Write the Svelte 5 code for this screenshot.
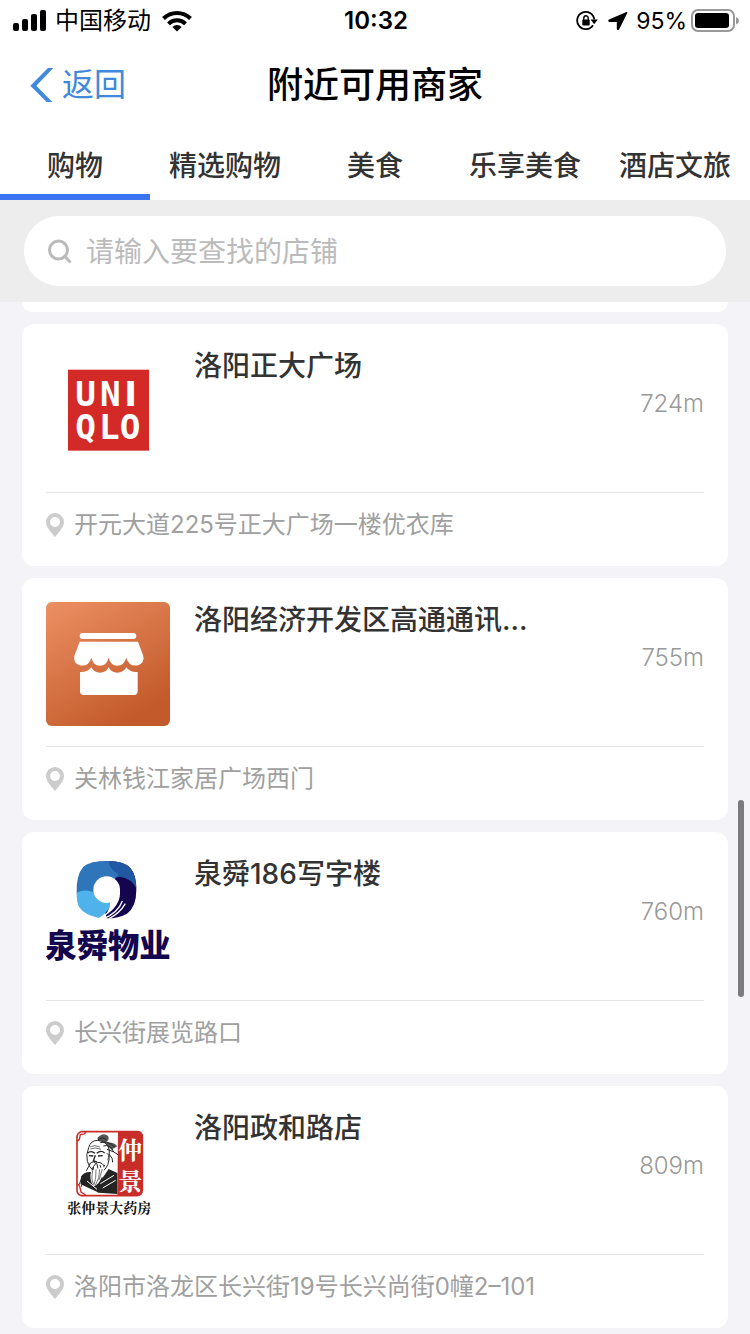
<script lang="ts">
  let tabs = ['购物', '精选购物', '美食', '乐享美食', '酒店文旅'];
  let activeTab = '购物';
  let keyword = '';

  let shops = [
    { logo: 'uniqlo', name: '洛阳正大广场', distance: '724m', address: '开元大道225号正大广场一楼优衣库' },
    { logo: 'default', name: '洛阳经济开发区高通通讯…', distance: '755m', address: '关林钱江家居广场西门' },
    { logo: 'quanshun', name: '泉舜186写字楼', distance: '760m', address: '长兴街展览路口' },
    { logo: 'zhongjing', name: '洛阳政和路店', distance: '809m', address: '洛阳市洛龙区长兴街19号长兴尚街0幢2–101' },
  ];
</script>

<div class="page" lang="zh-CN">
  <div class="status-bar">
    <div class="status-left">
      <svg width="34" height="22" viewBox="0 0 34 22">
        <rect x="0" y="13" width="6" height="8" rx="2" />
        <rect x="9" y="9" width="6" height="12" rx="2" />
        <rect x="18" y="4" width="6" height="17" rx="2" />
        <rect x="27" y="0" width="6" height="21" rx="2" />
      </svg>
      <span class="carrier">中国移动</span>
      <svg width="30" height="22" viewBox="0 0 30 22">
        <g fill="none" stroke="#000" stroke-width="4">
          <path d="M1.5 8.5a19.2 19.2 0 0 1 27 0" />
          <path d="M6.5 13.8a12 12 0 0 1 17 0" />
        </g>
        <path d="M15 21.5l-4.6-4.6a6.6 6.6 0 0 1 9.2 0z" />
      </svg>
    </div>
    <span class="time">10:32</span>
    <div class="status-right">
      <svg width="22" height="20" viewBox="0 0 22 20">
        <path d="M17 14.2A8.600 8.600 0 1 1 18.300 8.500" fill="none" stroke="#000" stroke-width="1.8" />
        <path d="M14.600 8.500h7.200l-3.600 4.800z" />
        <rect x="6.3" y="8.5" width="7.4" height="6" rx="1" />
        <path d="M7.8 9V7a2.2 2.2 0 0 1 4.4 0v2" fill="none" stroke="#000" stroke-width="1.4" />
      </svg>
      <svg class="locate" width="20" height="20" viewBox="0 0 20 20">
        <path d="M18.500 1L1 8.600C-.2 9.200 0 11 1.500 11H8.800V17.600C8.800 19.400 10.600 19.500 11.200 18.300L19.300 1.900Q19.500 .7 18.500 1Z" />
      </svg>
      <span class="percent">95%</span>
      <svg width="48" height="24" viewBox="0 0 48 24">
        <rect x="1" y="1" width="42" height="21" rx="6" fill="none" stroke="#999" stroke-width="2" />
        <rect x="4" y="4" width="34" height="15" rx="3" />
        <path d="M45 8q3 1.200 3 3.700T45 15.500z" fill="#999" />
      </svg>
    </div>
  </div>

  <header class="nav-bar">
    <button class="back" type="button">
      <svg width="24" height="34" viewBox="0 0 72 102">
        <path d="M1 53L54 0H70L19 53L67 102H50Z" fill="#4089dc" />
      </svg>
      返回
    </button>
    <h1>附近可用商家</h1>
  </header>

  <nav class="tabs">
    {#each tabs as tab}
      <button type="button" class:active={activeTab === tab} on:click={() => (activeTab = tab)}>{tab}</button>
    {/each}
  </nav>

  <form class="search" on:submit|preventDefault>
    <label class="search-box">
      <svg width="26" height="26" viewBox="0 0 26 26">
        <circle cx="10.500" cy="12" r="9" fill="none" stroke="#bbb" stroke-width="3" />
        <path d="M17 18.500l5.500 6" stroke="#bbb" stroke-width="3" />
      </svg>
      <input type="text" aria-label="查找店铺" placeholder="请输入要查找的店铺" bind:value={keyword} />
    </label>
  </form>

  <main class="list">
    <div class="card-end"></div>
    {#each shops as shop}
      <article class="card">
        <div class="shop">
          {#if shop.logo === 'uniqlo'}
            <svg class="logo" viewBox="78 24 372 372">
              <rect x="144" y="89" width="243" height="243" fill="#d42a27" />
              <text class="uniqlo"><tspan x="197 271" y="197">UN</tspan><tspan class="narrow" x="332" y="197">I</tspan><tspan x="197 268 330" y="298">QLO</tspan></text>
            </svg>
          {:else if shop.logo === 'default'}
            <svg class="logo" viewBox="48 36 372 372">
              <defs>
                <linearGradient id="orange" x1="0" y1="0" x2="0.6" y2="1">
                  <stop offset="0" stop-color="#ec9063" />
                  <stop offset="1" stop-color="#c35a2b" />
                </linearGradient>
              </defs>
              <rect x="48" y="36" width="372" height="372" rx="18" fill="url(#orange)" />
              <g fill="#fff">
                <rect x="149" y="129" width="170" height="18" rx="9" />
                <path d="M149 155H324L340 198Q344 219 324 226Q297 231 289 203Q282 227 262 227Q242 227 236 203Q230 227 210 227Q190 227 184 203Q176 231 149 226Q129 219 133 198Z" />
                <path d="M150 246Q174 247 184 232Q192 248 210 248Q228 248 236 232Q244 248 262 248Q280 248 289 232Q300 248 323 246V304Q323 315 312 315H161Q150 315 150 304Z" />
              </g>
            </svg>
          {:else if shop.logo === 'quanshun'}
            <svg class="logo" viewBox="48 48 372 372">
              <path d="M230 63Q283 63 301 84Q320 105 319 150Q319 201 291 221Q266 235 230 235L200 120Z" fill="#14054f" />
              <path d="M185 68Q208 63 235 63Q286 63 303 87Q318 107 319 145Q307 116 270 110L210 120Z" fill="#2158a4" />
              <path d="M140 160Q138 105 160 80Q182 62 237 64Q236 85 265 104L205 180Q165 150 140 160Z" fill="#2e75b9" />
              <path d="M140 158Q165 146 191 157Q203 185 245 184Q240 214 207 234Q163 225 148 202Q139 187 140 158Z" fill="#50b2eb" />
              <circle cx="230" cy="149" r="40" fill="#fff" />
              <path d="M269 145Q279 202 207 237Q241 220 241 184Z" fill="#fff" />
              <path d="M277 183Q265 217 221 236M286 191Q269 220 237 236" fill="none" stroke="#fff" stroke-width="4" />
              <text class="quanshun" x="46" y="350">泉舜物业</text>
            </svg>
          {:else}
            <svg class="logo" viewBox="-12 0 372 372">
              <path d="M93 65H264Q278 68 277 82V240Q276 256 260 257H94Q80 253 81 238V82Q81 69 93 65Z" fill="#fff" stroke="#c92d28" stroke-width="5" />
              <path d="M204 65H264Q278 68 277 82V240Q276 256 260 257H202Z" fill="#c92d28" />
              <path d="M81 95l7-7 3-14 12-2 6-7M81 220l8 9 4 17 14 9" fill="none" stroke="#c92d28" stroke-width="4" />
              <path d="M142 84Q160 65 174 78Q181 89 166 98L147 99ZM164 98Q193 94 202 109L184 119Z" fill="#555" />
              <path d="M127 187Q107 182 94 198L92 223L147 248L202 252V189L176 177L158 203Z" fill="#242424" />
              <path d="M116 113Q122 91 143 91Q172 94 178 120L177 150Q172 179 151 188Q123 187 112 154Q107 134 116 113Z" fill="#fff" stroke="#292929" stroke-width="3" />
              <g fill="none" stroke="#222" stroke-width="3">
                <path d="M143 91Q158 76 170 91M151 98Q176 91 194 111M160 108Q181 101 191 126M171 118Q193 124 205 135M177 132Q190 145 188 157" />
                <path d="M113 129Q123 120 135 130M140 130Q153 119 164 129M117 137l13 1M144 138l14-1M136 136l-6 17 11 3" stroke-width="4" />
                <path d="M121 110Q133 103 150 111M121 117Q135 110 153 118M169 131Q180 129 173 151" stroke-width="2" />
                <path d="M118 162Q132 150 137 161Q150 151 163 168M121 161L109 182M137 161Q123 174 123 210M141 162Q149 190 137 224M150 165Q161 187 145 233M163 165L153 204M130 171Q129 188 129 217" />
                <path d="M96 199L88 224M106 193L94 230M124 211L145 248M191 189Q178 204 184 248" />
              </g>
              <path d="M124 181Q116 208 131 229Q146 227 158 196L164 171L148 174Z" fill="#fff" />
              <path d="M129 178Q121 209 132 224M138 178Q139 206 132 224M149 178Q150 204 136 226M157 177L147 211" fill="none" stroke="#333" stroke-width="2" />
              <path d="M151 221L192 196M158 234L197 211M111 213L141 238" stroke="#fff" stroke-width="3" />
              <text class="seal"><tspan x="205" y="147">仲</tspan><tspan x="205" y="241">景</tspan></text>
              <text class="caption" x="52" y="310">张仲景大药房</text>
            </svg>
          {/if}
          <div class="info">
            <h2>{shop.name}</h2>
            <p class="distance">{shop.distance}</p>
          </div>
        </div>
        <p class="address">
          <svg width="18" height="24" viewBox="0 0 18 24">
            <path fill-rule="evenodd" d="M9 0a9 9 0 0 1 9 9c0 5-5 10-9 15C5 19 0 14 0 9a9 9 0 0 1 9-9zm0 4a5 5 0 1 0 0 10a5 5 0 0 0 0-10z" fill="#ccc" />
          </svg>
          {shop.address}
        </p>
      </article>
    {/each}
  </main>
  <div class="scroll-thumb"></div>
</div>

<style>
  :global(body) {
    background: #f3f3f8;
  }

  .page {
    font-family: Inter, "Noto Sans CJK SC", sans-serif;
    color: #333;
  }

  svg {
    display: block;
    flex: none;
  }

  button {
    padding: 0;
    border: none;
    background: none;
    font-family: inherit;
    cursor: pointer;
  }

  h1, h2, p {
    margin: 0;
  }

  .status-bar {
    display: grid;
    grid-template-columns: 1fr auto 1fr;
    align-items: center;
    height: 40px;
    padding: 0 11px 0 13px;
    background: #fff;
    color: #000;
    font-size: 24px;
    line-height: 42px;
  }

  .status-left,
  .status-right {
    display: flex;
    align-items: center;
  }

  .status-right {
    justify-content: flex-end;
  }

  .carrier {
    margin: 0 11px 0 8px;
  }

  .time {
    font-weight: 600;
  }

  .locate {
    margin: 0 8px 0 10px;
  }

  .percent {
    margin-right: 4px;
    font-size: 23px;
  }

  .nav-bar {
    display: grid;
    grid-template-columns: 1fr auto 1fr;
    align-items: center;
    height: 90px;
    padding: 0 30px;
    background: #fff;
  }

  .back {
    display: flex;
    align-items: center;
    gap: 8px;
    color: #4089dc;
    font-size: 32px;
    line-height: 40px;
  }

  h1 {
    color: #000;
    font-size: 36px;
    font-weight: 500;
    line-height: 48px;
  }

  .tabs {
    display: grid;
    grid-template-columns: repeat(5, 1fr);
    background: #fff;
  }

  .tabs button {
    height: 70px;
    padding-top: 4px;
    border-bottom: 6px solid transparent;
    color: #333;
    font-size: 28px;
    font-weight: 500;
    white-space: nowrap;
  }

  .tabs button.active {
    border-bottom-color: #3b74f2;
  }

  .search {
    padding: 16px 24px;
    background: #ededed;
  }

  .search-box {
    display: flex;
    align-items: center;
    gap: 12px;
    height: 70px;
    padding: 0 24px;
    border-radius: 35px;
    background: #fff;
  }

  .search-box input {
    flex: 1;
    min-width: 0;
    padding: 2px 0 0;
    border: none;
    outline: none;
    background: none;
    color: #333;
    font-family: inherit;
    font-size: 28px;
  }

  .search-box input::placeholder {
    color: #bbb;
  }

  .list {
    display: flex;
    flex-direction: column;
    gap: 12px;
    padding: 0 22px 6px;
  }

  .card-end {
    height: 10px;
    border-radius: 0 0 12px 12px;
    background: #fff;
  }

  .card {
    padding: 24px 24px 25px;
    border-radius: 12px;
    background: #fff;
  }

  .shop {
    display: flex;
    gap: 24px;
    padding-bottom: 20px;
    border-bottom: 1px solid #e5e5e5;
  }

  .logo {
    width: 124px;
    height: 124px;
  }

  .info {
    flex: 1;
    min-width: 0;
  }

  h2 {
    font-size: 28px;
    font-weight: 500;
    line-height: 36px;
  }

  .distance {
    margin-top: 4px;
    color: #999;
    font-size: 24px;
    font-weight: 300;
    line-height: 32px;
    text-align: right;
  }

  .address {
    display: flex;
    align-items: center;
    gap: 10px;
    padding-top: 16px;
    color: #a0a0a0;
    font-size: 24px;
    line-height: 32px;
  }

  .uniqlo {
    fill: #fff;
    font: bold 103px "DejaVu Sans Mono", monospace;
    text-anchor: middle;
  }

  .narrow {
    font-family: "DejaVu Sans", sans-serif;
  }

  .quanshun {
    fill: #14054f;
    font: 900 94px "Noto Sans CJK SC", sans-serif;
  }

  .seal {
    fill: #fff;
    font: bold 72px "Noto Serif CJK SC", "Noto Sans CJK SC", serif;
  }

  .caption {
    fill: #111;
    font: bold 42px "Noto Serif CJK SC", "Noto Sans CJK SC", serif;
  }

  .scroll-thumb {
    position: fixed;
    top: 800px;
    right: 6px;
    width: 6px;
    height: 197px;
    border-radius: 3px;
    background: #7b7b7d;
  }
</style>
